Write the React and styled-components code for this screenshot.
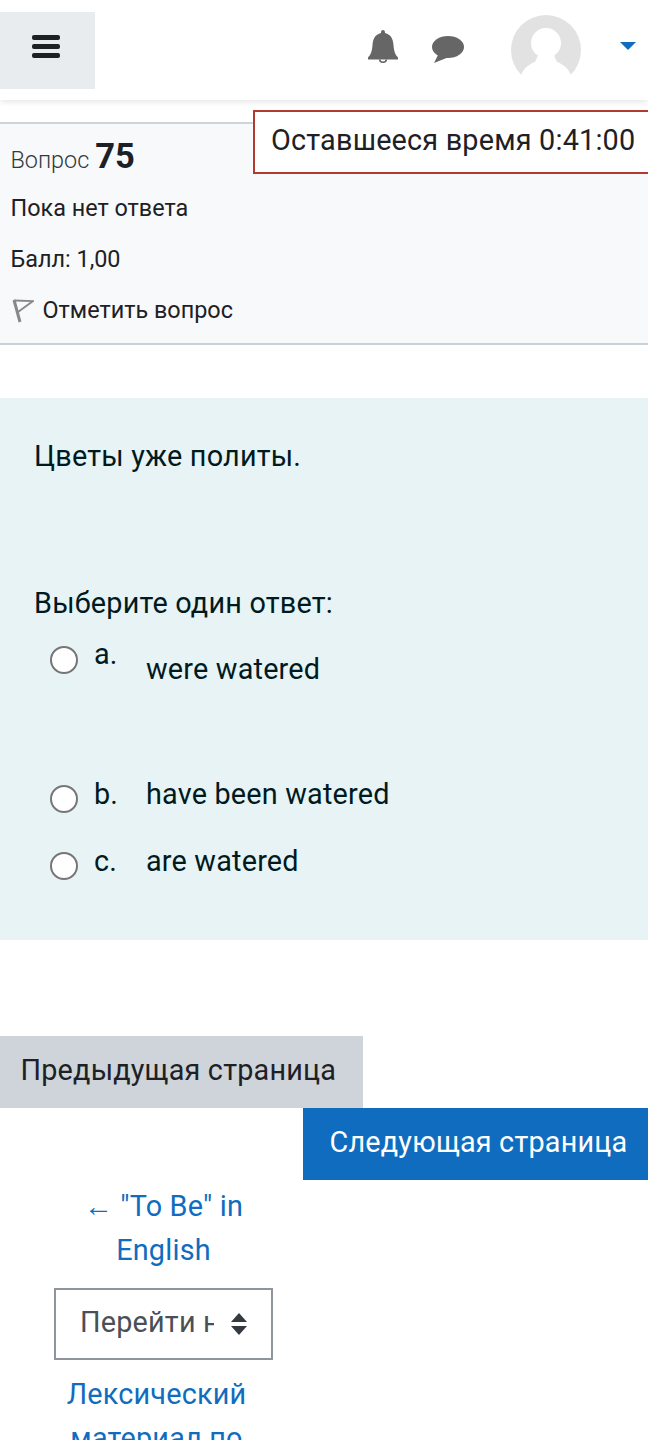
import React from 'react';
import styled, { createGlobalStyle } from 'styled-components';

const GlobalStyle = createGlobalStyle`
    html, body {
        margin: 0;
        padding: 0;
        background: #fff;
        font-family: Roboto, "Liberation Sans", sans-serif;
        letter-spacing: 0.2px;
        color: #1d2125;
    }
`;

const Page = styled.div`
    position: relative;
    width: 648px;
    height: 1440px;
    overflow: hidden;
`;

const Navbar = styled.header`
    height: 100px;
    display: flex;
    align-items: flex-start;
    background: #fff;
    box-shadow: 0 2px 6px rgba(0, 0, 0, 0.1);
`;

const MenuButton = styled.div`
    width: 95px;
    height: 77px;
    margin-top: 12px;
    background: #e9ecef;
    display: flex;
    align-items: center;
    justify-content: center;
    padding-right: 4px;
    padding-bottom: 8px;
    box-sizing: border-box;
`;

const Burger = styled.div`
    width: 28px;
    display: flex;
    flex-direction: column;
    gap: 4.5px;
    span {
        height: 4.5px;
        border-radius: 2px;
        background: #1d2125;
    }
`;

const NavIcons = styled.div`
    margin-left: auto;
    display: flex;
    align-items: flex-start;
    fill: #666;
`;

const BellIcon = styled.svg`
    width: 30px;
    height: 33px;
    margin: 30px 34px 0 0;
`;

const ChatIcon = styled.svg`
    width: 32px;
    height: 27px;
    margin: 36px 47px 0 0;
`;

const Avatar = styled.svg`
    width: 70px;
    height: 70px;
    margin: 15px 39px 0 0;
`;

const Caret = styled.div`
    width: 0;
    height: 0;
    margin: 42px 12px 0 0;
    border-left: 8px solid transparent;
    border-right: 8px solid transparent;
    border-top: 8px solid #0f6cbf;
`;

const Timer = styled.div`
    position: absolute;
    left: 253px;
    top: 110px;
    width: 395px;
    height: 64px;
    box-sizing: border-box;
    border: 2px solid #b23a2e;
    border-right: 0;
    background: #fff;
    padding-left: 16px;
    font-size: 28.8px;
    line-height: 56px;
    color: #1d2125;
    white-space: nowrap;
`;

const QuestionInfo = styled.section`
    margin-top: 22px;
    height: 223px;
    box-sizing: border-box;
    background: #f8f9fa;
    border-top: 2px solid #ced4da;
    border-bottom: 2px solid #c8d3d8;
    padding: 11px 11px 0 10.5px;
`;

const QuestionTitle = styled.div`
    display: flex;
    align-items: baseline;
    gap: 6px;
    height: 47px;
    font-size: 23.4px;
    line-height: 42px;
    font-weight: 300;
    letter-spacing: 0;
    color: #33383d;
    b {
        font-size: 34.5px;
        font-weight: 700;
        color: #1d2125;
    }
`;

const InfoLine = styled.div`
    display: flex;
    align-items: center;
    height: 51px;
    font-size: 23.4px;
    letter-spacing: 0;
    color: #1d2125;
`;

const FlagIcon = styled.svg`
    width: 22px;
    height: 26px;
    margin: 2px 9px 0 1px;
`;

const QuestionPanel = styled.section`
    margin-top: 53px;
    height: 542px;
    box-sizing: border-box;
    background: #e7f3f5;
    padding: 36px 34px 0;
    color: #001a1e;
    font-size: 28.8px;
    line-height: 44px;
`;

const Prompt = styled.div`
    height: 147px;
`;

const Legend = styled.div`
    height: 44px;
`;

const AnswerList = styled.div`
    margin-top: 8px;
`;

const Answer = styled.div`
    display: flex;
    height: ${(p) => p.$height}px;
    padding-left: 16px;
`;

const Radio = styled.span`
    flex: none;
    width: 28px;
    height: 28px;
    box-sizing: border-box;
    margin-top: 13px;
    border: 2px solid #767676;
    border-radius: 50%;
    background: #fff;
`;

const AnswerLetter = styled.span`
    flex: none;
    width: 52px;
    margin-left: 16px;
    font-size: 28.8px;
    margin-top: ${(p) => p.$top}px;
`;

const AnswerText = styled.span`
    margin-top: ${(p) => p.$top}px;
`;

const Pager = styled.div`
    margin-top: 96px;
    display: flex;
    flex-direction: column;
`;

const PagerButton = styled.div`
    width: ${(p) => p.$width}px;
    height: 72px;
    box-sizing: border-box;
    padding-left: ${(p) => (p.$next ? 26.5 : 20.5)}px;
    margin-left: ${(p) => (p.$next ? 'auto' : '0')};
    background: ${(p) => (p.$next ? '#0f6cbf' : '#ced4da')};
    color: ${(p) => (p.$next ? '#fff' : '#1d2125')};
    font-size: 28.8px;
    line-height: 68px;
`;

const ActivityNav = styled.nav`
    width: 327px;
    padding-top: 4px;
    text-align: center;
    font-size: 28.8px;
    line-height: 44px;
    color: #0f6cbf;
`;

const PrevLink = styled.div`
    padding: 0 60px;
`;

const JumpSelect = styled.div`
    position: relative;
    width: 219px;
    height: 72px;
    box-sizing: border-box;
    margin: 16px 0 12px 54px;
    border: 2px solid #8f959e;
    padding: 0 0 4px 24px;
    display: flex;
    align-items: center;
    color: #495057;
    text-align: left;
`;

const JumpLabel = styled.span`
    width: 134px;
    overflow: hidden;
    white-space: nowrap;
`;

const SelectArrows = styled.svg`
    position: absolute;
    right: 23.5px;
    top: 23px;
    width: 18px;
    height: 22px;
`;

const NextLink = styled.div`
    padding-right: 14px;
`;

export default function App() {
    return (
        <Page>
            <GlobalStyle />
            <Navbar>
                <MenuButton>
                    <Burger><span /><span /><span /></Burger>
                </MenuButton>
                <NavIcons>
                    <BellIcon viewBox="0 0 30 33">
                        <path d="M15 0 C16.500 0 17 1 17 3 C23 4.500 25 9 25.500 15 C26 21 27 24.500 30 27.500 L30 29.500 L0 29.500 L0 27.500 C3 24.500 4 21 4.500 15 C5 9 7 4.500 13 3 C13 1 13.500 0 15 0 Z" />
                        <path d="M11.500 29.500 A3.600 3.600 0 0 0 18.500 29.500" fill="none" stroke="#666" strokeWidth="1.500" />
                    </BellIcon>
                    <ChatIcon viewBox="0 0 32 27">
                        <ellipse cx="16" cy="11" rx="16" ry="11" />
                        <path d="M7 17 L2 27 L17 21 Z" />
                    </ChatIcon>
                    <Avatar viewBox="0 0 70 70">
                        <circle cx="35" cy="35" r="35" fill="#e2e2e2" />
                        <ellipse cx="35" cy="28" rx="15" ry="15" fill="#fff" />
                        <path d="M28 38 L42 38 L46 47 C52 49 57 53 60 60 L70 60 L70 70 L0 70 L0 60 L10 60 C13 53 18 49 24 47 Z" fill="#fff" />
                    </Avatar>
                    <Caret />
                </NavIcons>
            </Navbar>
            <Timer>Оставшееся время 0:41:00</Timer>
            <QuestionInfo>
                <QuestionTitle>Вопрос <b>75</b></QuestionTitle>
                <InfoLine>Пока нет ответа</InfoLine>
                <InfoLine>Балл: 1,00</InfoLine>
                <InfoLine>
                    <FlagIcon viewBox="0 0 22 26" fill="none" stroke="#888">
                        <path d="M2 2 L8 24" strokeWidth="3" />
                        <path d="M2 2.500 L21 3 L6 14" strokeWidth="1.800" />
                    </FlagIcon>
                    Отметить вопрос
                </InfoLine>
            </QuestionInfo>
            <QuestionPanel>
                <Prompt>Цветы уже политы.</Prompt>
                <Legend>Выберите один ответ:</Legend>
                <AnswerList>
                    <Answer $height={139}>
                        <Radio />
                        <AnswerLetter $top={-1}>a.</AnswerLetter>
                        <AnswerText $top={14}>were watered</AnswerText>
                    </Answer>
                    <Answer $height={67}>
                        <Radio />
                        <AnswerLetter $top={0}>b.</AnswerLetter>
                        <AnswerText $top={0}>have been watered</AnswerText>
                    </Answer>
                    <Answer $height={67}>
                        <Radio />
                        <AnswerLetter $top={0}>c.</AnswerLetter>
                        <AnswerText $top={0}>are watered</AnswerText>
                    </Answer>
                </AnswerList>
            </QuestionPanel>
            <Pager>
                <PagerButton $width={363}>Предыдущая страница</PagerButton>
                <PagerButton $next $width={345}>Следующая страница</PagerButton>
            </Pager>
            <ActivityNav>
                <PrevLink>← "To Be" in English</PrevLink>
                <JumpSelect>
                    <JumpLabel>Перейти на...</JumpLabel>
                    <SelectArrows viewBox="0 0 18 22" fill="#343a40">
                        <path d="M9 0 L17 9 L1 9 Z M1 13 L17 13 L9 22 Z" />
                    </SelectArrows>
                </JumpSelect>
                <NextLink>Лексический материал по</NextLink>
            </ActivityNav>
        </Page>
    );
}
